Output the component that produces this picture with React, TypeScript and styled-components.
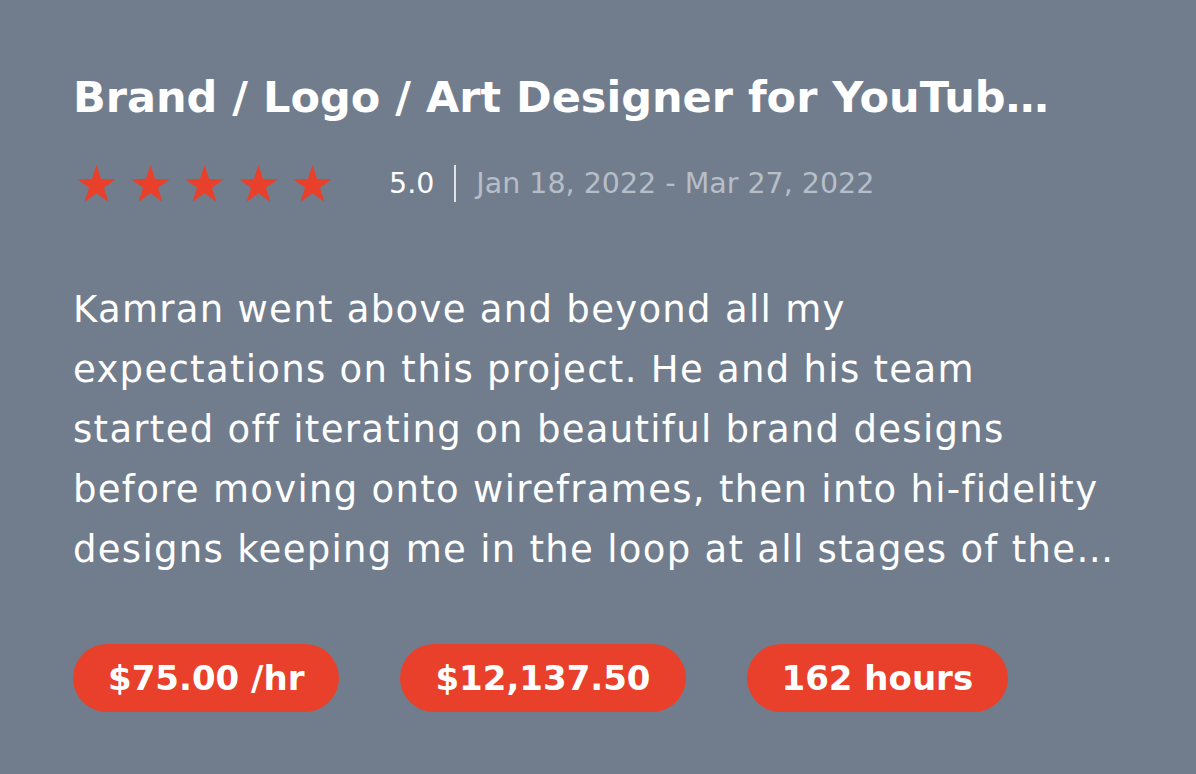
import React from "react";
import styled, { createGlobalStyle } from "styled-components";

const GlobalStyle = createGlobalStyle`
  html, body {
    margin: 0;
    padding: 0;
    background: #717d8d;
  }
  body {
    font-family: "DejaVu Sans", "Open Sans", sans-serif;
    -webkit-font-smoothing: antialiased;
  }
`;

const Page = styled.div`
  width: 1196px;
  height: 774px;
  box-sizing: border-box;
  padding: 69px 73px 0;
  background: #717d8d;
  color: #ffffff;
`;

const Title = styled.h1`
  margin: 0;
  max-width: 986px;
  font-size: 43px;
  line-height: 56px;
  font-weight: 700;
  white-space: nowrap;
  overflow: hidden;
  text-overflow: ellipsis;
`;

const MetaRow = styled.div`
  display: flex;
  align-items: center;
  margin-top: 38px;
  height: 40px;
`;

const Stars = styled.div`
  display: flex;
  gap: 15px;
  padding-left: 4px;
`;

const Rating = styled.span`
  margin-left: 57px;
  font-size: 28.5px;
  color: #ffffff;
`;

const Divider = styled.span`
  width: 2px;
  height: 37px;
  margin: 0 20px;
  background: #dfe3e8;
`;

const DateRange = styled.span`
  font-size: 28.5px;
  color: #b7bec8;
`;

const Review = styled.p`
  margin: 77px 0 0;
  width: 1060px;
  font-size: 37px;
  line-height: 60px;
  letter-spacing: 1.3px;
  color: #ffffff;
`;

const Line = styled.span`
  display: block;
  white-space: nowrap;
`;

const Chips = styled.div`
  display: flex;
  gap: 61px;
  margin-top: 64px;
`;

const Chip = styled.span`
  display: inline-flex;
  align-items: center;
  height: 68px;
  padding: 0 35px;
  border-radius: 34px;
  background: #e8402a;
  color: #ffffff;
  font-size: 34px;
  font-weight: 700;
  white-space: nowrap;
`;

const Star = () => (
  <svg width="39" height="37" viewBox="0 0 100 95.2">
    <polygon
      fill="#e8402a"
      points="50,0 61.82,36.34 100,36.35 69.12,58.81 80.92,95.15 50,72.7 19.08,95.15 30.88,58.81 0,36.35 38.18,36.34"
    />
  </svg>
);

// lines as shown in the clamped card preview
const reviewLines = [
  "Kamran went above and beyond all my",
  "expectations on this project. He and his team",
  "started off iterating on beautiful brand designs",
  "before moving onto wireframes, then into hi-fidelity",
  "designs keeping me in the loop at all stages of the…",
];

const App = () => {
  return (
    <Page>
      <GlobalStyle />
      <Title>Brand / Logo / Art Designer for YouTube Channel and Website</Title>
      <MetaRow>
        <Stars>
          {[0, 1, 2, 3, 4].map((i) => (
            <Star key={i} />
          ))}
        </Stars>
        <Rating>5.0</Rating>
        <Divider />
        <DateRange>Jan 18, 2022 - Mar 27, 2022</DateRange>
      </MetaRow>
      <Review>
        {reviewLines.map((l) => (
          <Line key={l}>{l}</Line>
        ))}
      </Review>
      <Chips>
        <Chip>$75.00 /hr</Chip>
        <Chip>$12,137.50</Chip>
        <Chip>162 hours</Chip>
      </Chips>
    </Page>
  );
};

export default App;
